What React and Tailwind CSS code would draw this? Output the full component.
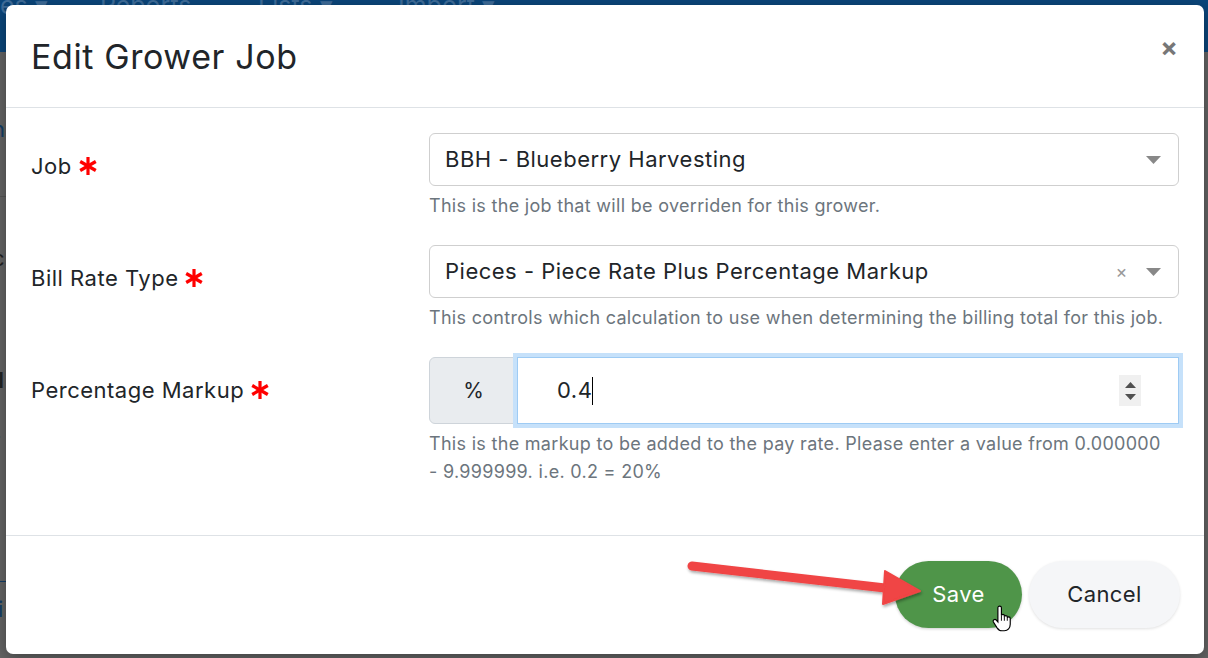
import React from "react";

function Asterisk() {
  return (
    <svg width="20" height="20" viewBox="0 0 20 20" className="ml-[6px] shrink-0">
      <g stroke="#ff0000" strokeWidth="3.2" strokeLinecap="butt">
        <line x1="10" y1="1" x2="10" y2="19" />
        <line x1="2.2" y1="5.5" x2="17.8" y2="14.5" />
        <line x1="2.2" y1="14.5" x2="17.8" y2="5.5" />
      </g>
    </svg>
  );
}

function Caret() {
  return (
    <svg width="15" height="8" viewBox="0 0 15 8">
      <path d="M0 0 H15 L7.5 8 Z" fill="#888" />
    </svg>
  );
}

function Field({ label, children, help }) {
  return (
    <div className="grid grid-cols-[398px_1fr]">
      <div className="pt-[20px] flex items-center h-[45px] text-[22px] tracking-[0.5px] text-[#212529]">
        <span className="leading-[26px]">{label}</span>
        <Asterisk />
      </div>
      <div>
        {children}
        <div className="mt-[6px] text-[18px] tracking-[0.3px] leading-[28px] text-[#6c757d]">{help}</div>
      </div>
    </div>
  );
}

function Select({ value, clearable }) {
  return (
    <div className="h-[53px] border border-[#cfcfcf] rounded-[6px] flex items-center pl-[15px] pr-[17px] text-[22px] tracking-[0.5px] text-[#212529]">
      <span className="flex-1">{value}</span>
      {clearable && <span className="text-[#999] text-[18px] mr-[18px]">×</span>}
      <Caret />
    </div>
  );
}

function HandCursor() {
  return (
    <svg width="20" height="28" viewBox="0 0 17 23" className="absolute left-[992px] top-[605px]">
      <path
        d="M6.5 0.5 C7.4 0.5 8 1.1 8 2 V8.5 C8.2 7.8 8.7 7.5 9.3 7.5 C10 7.5 10.5 8 10.5 8.8 V9.5 C10.7 8.9 11.2 8.6 11.8 8.6 C12.5 8.6 13 9.1 13 9.8 V10.5 C13.2 10 13.7 9.7 14.2 9.7 C14.9 9.7 15.5 10.2 15.5 11 V16 C15.5 19 13.5 21.5 10.5 21.5 H8.5 C6.5 21.5 5.3 20.5 4.3 19 L1.2 14 C0.8 13.3 1 12.5 1.7 12.1 C2.4 11.7 3.2 11.9 3.7 12.5 L5 14 V2 C5 1.1 5.6 0.5 6.5 0.5 Z"
        fill="#fff"
        stroke="#000"
        strokeWidth="1"
      />
      <path d="M8 8.5 V13 M10.5 9.5 V13 M13 10.5 V13" stroke="#000" strokeWidth="0.8" />
    </svg>
  );
}

function Arrow() {
  return (
    <svg width="260" height="70" viewBox="0 0 260 70" className="absolute left-[680px] top-[550px]">
      <defs>
        <filter id="sh" x="-10%" y="-30%" width="120%" height="160%">
          <feDropShadow dx="1" dy="2" stdDeviation="1.5" floodColor="#000" floodOpacity="0.35" />
        </filter>
      </defs>
      <g filter="url(#sh)">
        <line x1="12" y1="16" x2="214" y2="39" stroke="#f04444" strokeWidth="9" strokeLinecap="round" />
        <path d="M205 21 L240 41 L203 54 Z" fill="#f04444" stroke="#f04444" strokeWidth="2" strokeLinejoin="round" />
      </g>
    </svg>
  );
}

export default function App() {
  return (
    <div className="relative w-[1208px] h-[658px] overflow-hidden bg-[#646464] font-['Inter',sans-serif]">
      {/* page behind the dialog */}
      <div className="h-[52px] bg-[#0b467b] flex text-[25px] text-[#3f6d9a] overflow-hidden">
        <span className="-mt-[13px] w-[100px]">es ▾</span>
        <span className="-mt-[13px] w-[158px]">Reports</span>
        <span className="-mt-[13px] w-[140px]">Lists ▾</span>
        <span className="-mt-[13px]">Import ▾</span>
      </div>
      <div className="text-[22px] leading-none">
        <div className="mt-[66px] text-[#123d66] -ml-[8px]">h</div>
        <div className="mt-[56px] border-t border-[#555] w-[6px]" />
        <div className="mt-[50px] text-[#222] -ml-[8px]">c</div>
        <div className="mt-[100px] text-[#222] font-bold -ml-[10px]">d</div>
        <div className="mt-[38px] text-[#222] -ml-[8px]">r</div>
        <div className="mt-[38px] text-[#222] -ml-[8px]">t</div>
        <div className="mt-[70px] border-t border-[#123d66] w-[6px]" />
        <div className="mt-[16px] text-[#123d66] -ml-[2px]">i</div>
      </div>

      {/* dialog */}
      <div className="absolute left-[6px] top-[5px] w-[1198px] h-[649px] bg-white rounded-[7px] shadow-[0_4px_16px_rgba(0,0,0,0.35)] flex flex-col">
        <div className="h-[103px] shrink-0 border-b border-[#dee2e6] flex items-center justify-between pl-[25px] pr-[26px]">
          <h3 className="text-[34px] tracking-[0.6px] text-[#212529]">Edit Grower Job</h3>
          <span className="text-[#777] text-[26px] font-bold leading-none mb-[16px]">×</span>
        </div>

        <div className="flex-1 px-[25px] pt-[25px] flex flex-col gap-[25px]">
          <Field label="Job" help="This is the job that will be overriden for this grower.">
            <Select value="BBH - Blueberry Harvesting" />
          </Field>
          <Field
            label="Bill Rate Type"
            help="This controls which calculation to use when determining the billing total for this job."
          >
            <Select value="Pieces - Piece Rate Plus Percentage Markup" clearable />
          </Field>
          <Field
            label="Percentage Markup"
            help={
              <>
                This is the markup to be added to the pay rate. Please enter a value from 0.000000{" "}
                <span className="whitespace-nowrap">- 9.999999.</span> i.e. 0.2 = 20%
              </>
            }
          >
            <div className="flex h-[67px]">
              <div className="w-[89px] shrink-0 bg-[#e9ecef] border border-[#ced4da] rounded-l-[6px] flex items-center justify-center text-[21px] text-[#212529]">
                %
              </div>
              <div className="relative z-10 -ml-px flex-1 border border-[#9ecbf4] shadow-[0_0_0_4px_#c6e1fa] flex items-center pl-[39px] pr-[37px] text-[22px] tracking-[0.5px] text-[#212529]">
                <span>0.4</span>
                <span className="w-px h-[28px] bg-black" />
                <span className="flex-1" />
                <div className="w-[22px] h-[31px] bg-[#f0f0f0] flex flex-col items-center justify-center gap-[6px]">
                  <svg width="11" height="6" viewBox="0 0 11 6"><path d="M0 6 H11 L5.5 0 Z" fill="#505050" /></svg>
                  <svg width="11" height="6" viewBox="0 0 11 6"><path d="M0 0 H11 L5.5 6 Z" fill="#505050" /></svg>
                </div>
              </div>
            </div>
          </Field>
        </div>

        <div className="h-[119px] shrink-0 border-t border-[#dee2e6] flex items-start justify-end gap-[7px] pt-[25px] pr-[24px]">
          <button className="h-[67px] w-[127px] rounded-full bg-[#4f9549] text-white text-[22px] tracking-[0.4px] shadow-[0_1px_3px_rgba(0,0,0,0.2)]">
            Save
          </button>
          <button className="h-[67px] w-[151px] rounded-full bg-[#f5f6f8] text-[#212529] text-[22px] tracking-[0.4px] shadow-[0_1px_3px_rgba(0,0,0,0.12)]">
            Cancel
          </button>
        </div>
      </div>

      <Arrow />
      <HandCursor />
    </div>
  );
}
